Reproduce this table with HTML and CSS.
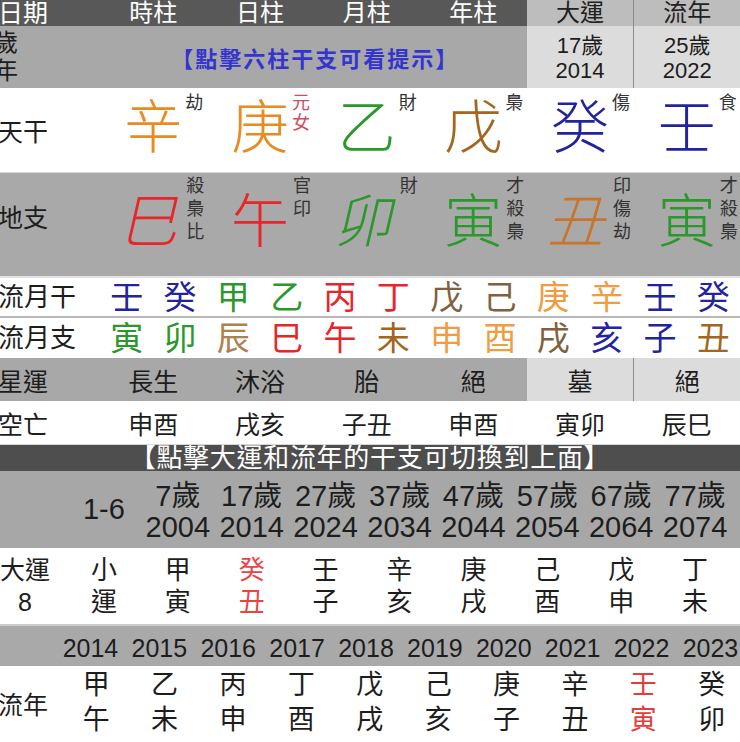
FILE: index.html
```html
<!DOCTYPE html>
<html lang="zh-Hant">
<head>
<meta charset="utf-8">
<title>八字</title>
<link rel="stylesheet" href="styles.css">
</head>
<body>
<div class="sheet">
  <div class="row top r-head">
    <div class="lab dk"><span class="lt">日期</span></div>
    <div class="cell dk">時柱</div>
    <div class="cell dk">日柱</div>
    <div class="cell dk">月柱</div>
    <div class="cell dk">年柱</div>
    <div class="cell lg">大運</div>
    <div class="cell lg vdiv">流年</div>
  </div>

  <div class="row top r-age">
    <div class="lab md"><span class="lt stack age-lab"><span>歲</span><span>年</span></span></div>
    <div class="cell md hint">【點擊六柱干支可看提示】</div>
    <div class="cell pale two"><span>17歲</span><span>2014</span></div>
    <div class="cell pale two vdiv"><span>25歲</span><span>2022</span></div>
  </div>

  <div class="row top r-gan">
    <div class="lab"><span class="lt">天干</span></div>
    <div class="cell gz"><span class="big or">辛<span class="tag">劫</span></span></div>
    <div class="cell gz"><span class="big or">庚<span class="tag pink">元<br>女</span></span></div>
    <div class="cell gz"><span class="big gr">乙<span class="tag">財</span></span></div>
    <div class="cell gz"><span class="big br">戊<span class="tag">梟</span></span></div>
    <div class="cell gz"><span class="big bl">癸<span class="tag">傷</span></span></div>
    <div class="cell gz"><span class="big bl">壬<span class="tag">食</span></span></div>
  </div>

  <div class="row top r-zhi">
    <div class="lab"><span class="lt">地支</span></div>
    <div class="cell gz"><span class="big rd"><span class="slant">巳</span><span class="tag">殺<br>梟<br>比</span></span></div>
    <div class="cell gz"><span class="big rd">午<span class="tag">官<br>印</span></span></div>
    <div class="cell gz"><span class="big gr"><span class="slant">卯</span><span class="tag">財</span></span></div>
    <div class="cell gz"><span class="big gr">寅<span class="tag">才<br>殺<br>梟</span></span></div>
    <div class="cell gz"><span class="big ob"><span class="slant">丑</span><span class="tag">印<br>傷<br>劫</span></span></div>
    <div class="cell gz"><span class="big gr">寅<span class="tag">才<br>殺<br>梟</span></span></div>
  </div>

  <div class="row month r-mg">
    <div class="lab"><span class="lt">流月干</span></div>
    <div class="cell bl">壬</div>
    <div class="cell bl">癸</div>
    <div class="cell gr">甲</div>
    <div class="cell gr">乙</div>
    <div class="cell rd">丙</div>
    <div class="cell rd">丁</div>
    <div class="cell dbr">戊</div>
    <div class="cell dbr">己</div>
    <div class="cell lor">庚</div>
    <div class="cell lor">辛</div>
    <div class="cell bl">壬</div>
    <div class="cell bl">癸</div>
  </div>

  <div class="row month r-mz">
    <div class="lab"><span class="lt">流月支</span></div>
    <div class="cell gr">寅</div>
    <div class="cell gr">卯</div>
    <div class="cell lbr">辰</div>
    <div class="cell rd">巳</div>
    <div class="cell rd">午</div>
    <div class="cell br">未</div>
    <div class="cell lor">申</div>
    <div class="cell lor">酉</div>
    <div class="cell dbr">戌</div>
    <div class="cell bl">亥</div>
    <div class="cell bl">子</div>
    <div class="cell br">丑</div>
  </div>

  <div class="row top r-star">
    <div class="lab md"><span class="lt">星運</span></div>
    <div class="cell md">長生</div>
    <div class="cell md">沐浴</div>
    <div class="cell md">胎</div>
    <div class="cell md">絕</div>
    <div class="cell pale">墓</div>
    <div class="cell pale vdiv">絕</div>
  </div>

  <div class="row top r-void">
    <div class="lab"><span class="lt">空亡</span></div>
    <div class="cell">申酉</div>
    <div class="cell">戌亥</div>
    <div class="cell">子丑</div>
    <div class="cell">申酉</div>
    <div class="cell">寅卯</div>
    <div class="cell">辰巳</div>
  </div>

  <div class="band">【點擊大運和流年的干支可切換到上面】</div>

  <div class="row luck r-ages">
    <div class="cell"></div>
    <div class="cell">1-6</div>
    <div class="cell two"><span>7歲</span><span>2004</span></div>
    <div class="cell two"><span>17歲</span><span>2014</span></div>
    <div class="cell two"><span>27歲</span><span>2024</span></div>
    <div class="cell two"><span>37歲</span><span>2034</span></div>
    <div class="cell two"><span>47歲</span><span>2044</span></div>
    <div class="cell two"><span>57歲</span><span>2054</span></div>
    <div class="cell two"><span>67歲</span><span>2064</span></div>
    <div class="cell two"><span>77歲</span><span>2074</span></div>
  </div>

  <div class="row luck r-dy">
    <div class="lab"><span class="lt stack dy-lab"><span>大運</span><span>8</span></span></div>
    <div class="cell two"><span>小</span><span>運</span></div>
    <div class="cell two"><span>甲</span><span>寅</span></div>
    <div class="cell two hot"><span>癸</span><span>丑</span></div>
    <div class="cell two"><span>壬</span><span>子</span></div>
    <div class="cell two"><span>辛</span><span>亥</span></div>
    <div class="cell two"><span>庚</span><span>戌</span></div>
    <div class="cell two"><span>己</span><span>酉</span></div>
    <div class="cell two"><span>戊</span><span>申</span></div>
    <div class="cell two"><span>丁</span><span>未</span></div>
  </div>

  <div class="row r-years">
    <div class="cell">2014</div>
    <div class="cell">2015</div>
    <div class="cell">2016</div>
    <div class="cell">2017</div>
    <div class="cell">2018</div>
    <div class="cell">2019</div>
    <div class="cell">2020</div>
    <div class="cell">2021</div>
    <div class="cell">2022</div>
    <div class="cell">2023</div>
  </div>

  <div class="row r-ln">
    <div class="lab"><span class="lt">流年</span></div>
    <div class="cell two"><span>甲</span><span>午</span></div>
    <div class="cell two"><span>乙</span><span>未</span></div>
    <div class="cell two"><span>丙</span><span>申</span></div>
    <div class="cell two"><span>丁</span><span>酉</span></div>
    <div class="cell two"><span>戊</span><span>戌</span></div>
    <div class="cell two"><span>己</span><span>亥</span></div>
    <div class="cell two"><span>庚</span><span>子</span></div>
    <div class="cell two"><span>辛</span><span>丑</span></div>
    <div class="cell two hot2"><span>壬</span><span>寅</span></div>
    <div class="cell two"><span>癸</span><span>卯</span></div>
  </div>
</div>
</body>
</html>
```

FILE: styles.css
```css
* { box-sizing: border-box; margin: 0; padding: 0; }

html, body { background: #ffffff; }

body {
  width: 740px;
  height: 742px;
  overflow: hidden;
  font-family: "Liberation Sans", "Noto Sans CJK TC", sans-serif;
  color: #1d1d1d;
}

.sheet { width: 740px; }

.row { display: grid; }

.top { grid-template-columns: 100px repeat(6, 1fr); }
.month { grid-template-columns: 100px repeat(12, 1fr); }
.luck { grid-template-columns: 67px repeat(9, 73.9px); }

.cell {
  display: flex;
  align-items: center;
  justify-content: center;
  white-space: nowrap;
}

.lab {
  display: flex;
  align-items: center;
  justify-content: flex-start;
  font-size: 25px;
  white-space: nowrap;
}
.lt { margin-left: -2px; }

.stack { display: flex; flex-direction: column; align-items: center; }

.two { flex-direction: column; }

/* backgrounds */
.dk { background: #585858; color: #ffffff; }
.lg { background: #bdbdbd; color: #222; }
.md { background: #a8a8a8; }
.pale { background: #dcdcdc; }
.vdiv { border-left: 1px solid #8c8c8c; }

/* header */
.r-head { height: 26px; font-size: 24px; line-height: 26px; }

/* age row */
.r-age { height: 62px; }
.age-lab { font-size: 24px; line-height: 28px; margin-left: -6px; }
.hint {
  grid-column: span 4;
  font-size: 22px;
  font-weight: 700;
  color: #3434cf;
  letter-spacing: 2px;
  padding-left: 4px;
}
.r-age .two { font-size: 22px; line-height: 25px; padding-top: 2px; }

/* heavenly stems / earthly branches */
.r-gan { height: 84px; }
.r-zhi {
  height: 106px;
  background: #a9a9a9;
  border-top: 1px solid #d8d8d8;
  border-bottom: 2px solid #e4e4e4;
}
.r-gan .gz { padding-bottom: 4px; }
.r-zhi .gz { padding-bottom: 6px; }
.r-zhi .lab { padding-bottom: 18px; }

.big {
  position: relative;
  display: inline-block;
  font-size: 58px;
  line-height: 1;
  font-weight: 300;
}
.slant { display: inline-block; transform: skewX(-13deg); }

.tag {
  position: absolute;
  left: calc(100% + 3px);
  top: -6px;
  font-size: 18px;
  line-height: 20px;
  color: #333333;
  font-weight: 400;
}
.r-zhi .tag { top: -18px; line-height: 23px; left: calc(100% + 4px); }
.tag.pink { color: #d24a5c; }

/* colours */
.or { color: #ea8a22; }
.lor { color: #f09c40; }
.br { color: #a2661f; }
.dbr { color: #80603e; }
.lbr { color: #b0804e; }
.ob { color: #c8742a; }
.gr { color: #2a982a; }
.rd { color: #e6262a; }
.bl { color: #23239c; }

/* monthly rows */
.r-mg, .r-mz { font-size: 33px; line-height: 1; }
.r-mg .lab, .r-mz .lab { font-size: 26px; }
.r-mg { height: 40px; border-bottom: 2px solid #b8b8b8; }
.r-mz { height: 40px; }

/* star / void */
.r-star { height: 43px; font-size: 25px; }
.r-void { height: 44px; font-size: 25px; border-bottom: 1px solid #d6d6d6; }

/* band */
.band {
  height: 26px;
  background: #4e4e4e;
  color: #ffffff;
  font-size: 26px;
  line-height: 26px;
  letter-spacing: 0.7px;
  text-align: center;
  white-space: nowrap;
  overflow: hidden;
}

/* luck pillars */
.r-ages {
  height: 77px;
  background: #a7a7a7;
  font-size: 29px;
  line-height: 31px;
}
.r-ages .two { padding-top: 4px; }
.r-dy {
  height: 78px;
  font-size: 26px;
  line-height: 32px;
  border-bottom: 2px solid #cdcdcd;
}
.dy-lab { font-size: 25px; line-height: 32px; margin-left: -1px; width: 52px; }
.hot { color: #e84444; }
.hot2 { color: #e23c3c; }

/* yearly */
.r-years {
  height: 40px;
  background: #a9a9a9;
  grid-template-columns: repeat(10, 68.9px);
  padding-left: 56px;
  font-size: 25px;
  padding-top: 4px;
}
.r-ln {
  height: 74px;
  grid-template-columns: 62px repeat(10, 68.4px);
  font-size: 27px;
  line-height: 35px;
}
.r-ln .lab { padding-top: 4px; }
```
